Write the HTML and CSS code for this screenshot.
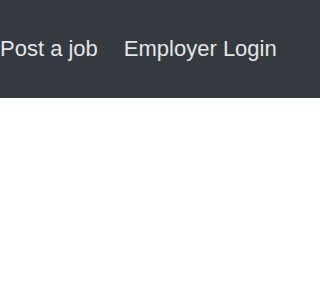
FILE: index.html
```html
<!DOCTYPE html>
<html lang="en">
<head>
<meta charset="utf-8">
<link rel="stylesheet" href="styles.css">
</head>
<body>
<header class="topbar">
  <nav class="nav">
    <a class="nav-link" href="#">Post a job</a>
    <a class="nav-link" href="#">Employer Login</a>
  </nav>
</header>
</body>
</html>
```
FILE: styles.css
```css
html, body {
  margin: 0;
  padding: 0;
  background: #ffffff;
}
body {
  font-family: "Liberation Sans", Arial, sans-serif;
}
.topbar {
  background: #343a40;
  height: 98px;
  display: flex;
  align-items: center;
}
.nav {
  display: flex;
  gap: 26px;
  padding-left: 0;
}
.nav-link {
  color: #e4e6e8;
  text-decoration: none;
  font-size: 22px;
  white-space: nowrap;
}
```
